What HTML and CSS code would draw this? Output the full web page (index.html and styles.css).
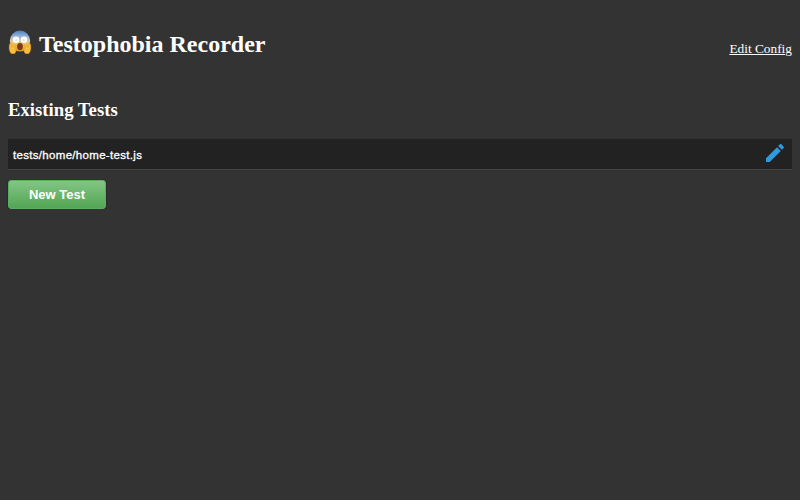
FILE: index.html
```html
<!DOCTYPE html>
<html lang="en">
<head>
<meta charset="utf-8">
<title>Testophobia Recorder</title>
<link rel="stylesheet" href="styles.css">
</head>
<body>
<header class="header">
  <h1 class="title">
    <svg class="face" viewBox="0 0 24 24" aria-hidden="true">
      <defs>
        <linearGradient id="skin" x1="0" y1="0" x2="0" y2="1">
          <stop offset="0" stop-color="#4d7fc4"/>
          <stop offset=".3" stop-color="#9dbbd8"/>
          <stop offset=".5" stop-color="#dcc89a"/>
          <stop offset=".7" stop-color="#f3b944"/>
          <stop offset="1" stop-color="#e79a26"/>
        </linearGradient>
      </defs>
      <ellipse cx="12" cy="11" rx="10.200" ry="10.400" fill="url(#skin)"/>
      <circle cx="8" cy="9.800" r="3.200" fill="#fff"/>
      <circle cx="16" cy="9.800" r="3.200" fill="#fff"/>
      <circle cx="8.200" cy="10" r=".5" fill="#a09488"/>
      <circle cx="15.800" cy="10" r=".5" fill="#a09488"/>
      <ellipse cx="12" cy="16.600" rx="2.900" ry="3.600" fill="#7a3b1c"/>
      <path d="M1.500 14c1-.7 1.600.2 1.900 1.400l.6 1.400 2.200-1.600c1-.5 1.600.3 1 1.100l-1.100 1.500 1.700 1.200c.6 1.800.1 3.600-1.400 4.800H3.400C1.200 21.700 1 18.700 1.200 16z" fill="#f8be3e" stroke="#dd9226" stroke-width=".35"/>
      <path d="M22.500 14c-1-.7-1.600.2-1.900 1.400l-.6 1.400-2.200-1.600c-1-.5-1.600.3-1 1.100l1.100 1.500-1.700 1.200c-.6 1.800-.1 3.600 1.400 4.800h3c2.200-2.100 2.400-5.100 2.200-7.800z" fill="#f8be3e" stroke="#dd9226" stroke-width=".35"/>
    </svg>
    <span>Testophobia Recorder</span>
  </h1>
  <a class="config" href="#">Edit Config</a>
</header>
<main>
  <h2 class="subtitle">Existing Tests</h2>
  <ul class="tests">
    <li class="test">
      <span>tests/home/home-test.js</span>
      <svg class="edit" viewBox="0 0 24 24" aria-hidden="true"><path d="M3 17.250V21h3.750L17.810 9.940l-3.750-3.750L3 17.250zM20.710 7.040c.39-.39.39-1.020 0-1.410l-2.340-2.340c-.39-.39-1.020-.39-1.410 0l-1.830 1.830 3.750 3.750 1.830-1.830z"/></svg>
    </li>
  </ul>
  <button class="new-test" type="button">New Test</button>
</main>
</body>
</html>
```
FILE: styles.css
```css
* {
  box-sizing: border-box;
}

body {
  margin: 0;
  padding: 30px 8px 0;
  background: #333;
  color: #fff;
  font-family: "Liberation Serif", serif;
}

.header {
  display: flex;
  justify-content: space-between;
  height: 28px;
}

.title {
  display: flex;
  gap: 7px;
  margin: 0;
  font-size: 24px;
  line-height: 28px;
}

.face {
  width: 24px;
  height: 24px;
}

.config {
  margin-top: 11px;
  color: #fff;
  font-size: 13.33px;
  line-height: 15px;
}

.subtitle {
  margin: 41px 0 0;
  font-size: 18.72px;
  line-height: 22px;
}

.tests {
  margin: 18px 0 10px;
  padding: 0;
  list-style: none;
}

.test {
  display: flex;
  align-items: center;
  justify-content: space-between;
  height: 31px;
  padding: 0 5px;
  background: #222;
  border-bottom: 1px solid #444;
  font: 11.5px/16px "Liberation Sans", sans-serif;
  letter-spacing: .31px;
  -webkit-text-stroke: .3px #fff;
}

.test span {
  padding-top: 2px;
}

.edit {
  width: 24px;
  height: 24px;
  margin: 0 0 2px;
  fill: #2f9ae0;
}

.new-test {
  display: block;
  width: 98px;
  height: 29px;
  padding: 0;
  border: 1px solid #5cad5f;
  border-radius: 3px;
  background: linear-gradient(#83c585, #52a654);
  box-shadow: 0 1px 2px rgba(0, 0, 0, .6);
  color: #fff;
  font: bold 13px/27px "Liberation Sans", sans-serif;
}
```
